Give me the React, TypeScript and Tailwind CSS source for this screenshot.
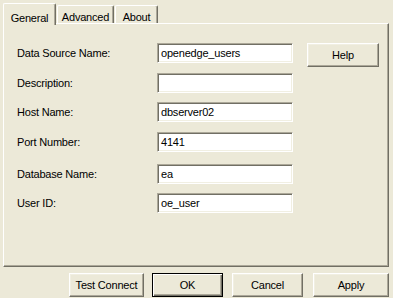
import React from 'react';

const fields = [
  { label: 'Data Source Name:', value: 'openedge_users', gap: 'mt-0' },
  { label: 'Description:', value: '', gap: 'mt-[10px]' },
  { label: 'Host Name:', value: 'dbserver02', gap: 'mt-[9px]' },
  { label: 'Port Number:', value: '4141', gap: 'mt-[10px]' },
  { label: 'Database Name:', value: 'ea', gap: 'mt-[12px]' },
  { label: 'User ID:', value: 'oe_user', gap: 'mt-[9px]' },
];

const raised =
  'border border-t-white border-l-white border-r-[#716f64] border-b-[#716f64] shadow-[inset_-1px_-1px_0_#aca899,inset_1px_1px_0_#f1efe2] bg-[#ece9d8]';

function Button({ label, className = '', isDefault = false }: { label: string; className?: string; isDefault?: boolean }) {
  if (isDefault) {
    return (
      <button className={`h-[24px] border border-black bg-[#ece9d8] shadow-[inset_1px_1px_0_#ffffff,inset_-1px_-1px_0_#716f64,inset_-2px_-2px_0_#aca899] flex items-center justify-center ${className}`}>
        {label}
      </button>
    );
  }
  return (
    <button className={`h-[24px] ${raised} flex items-center justify-center ${className}`}>
      {label}
    </button>
  );
}

export default function App() {
  return (
    <div className="w-[393px] h-[298px] bg-[#ece9d8] overflow-hidden text-[11px] tracking-[-0.2px] text-black font-['Liberation_Sans',Arial,sans-serif]">
      {/* tabs */}
      <div className="flex items-end h-[23px] pl-[3px] pt-[3px]">
        <div className="relative z-10 -mb-[2px] h-[22px] w-[53px] bg-[#ece9d8] border-l border-t border-r border-l-white border-t-white border-r-[#716f64] shadow-[inset_-1px_0_0_#aca899] rounded-tl-[2px] rounded-tr-[2px] flex justify-center pt-[6px]">
          General
        </div>
        <div className="ml-[1px] h-[18px] w-[57px] border-l border-t border-r border-l-white border-t-white border-r-[#716f64] shadow-[inset_-1px_0_0_#aca899] rounded-tl-[2px] rounded-tr-[2px] flex justify-center pt-[3px]">
          Advanced
        </div>
        <div className="ml-[1px] h-[18px] w-[43px] border-l border-t border-r border-l-white border-t-white border-r-[#716f64] shadow-[inset_-1px_0_0_#aca899] rounded-tl-[2px] rounded-tr-[2px] flex justify-center pt-[3px]">
          About
        </div>
      </div>

      {/* panel */}
      <div className="ml-[3px] w-[386px] h-[244px] border border-t-white border-l-white border-r-[#716f64] border-b-[#716f64] shadow-[inset_-1px_-1px_0_#aca899] pt-[19px] pl-[13px] flex items-start">
        <div className="flex flex-col">
          {fields.map((f) => (
            <div key={f.label} className={`flex items-center h-[20px] ${f.gap}`}>
              <span className="w-[140px]">{f.label}</span>
              <div className="w-[136px] h-[20px] bg-white border border-t-[#aca899] border-l-[#aca899] border-r-white border-b-white shadow-[inset_1px_1px_0_#716f64,inset_-1px_-1px_0_#f1efe2] flex items-center pl-[3px]">
                {f.value}
              </div>
            </div>
          ))}
        </div>
        <Button label="Help" className="ml-[14px] w-[72px]" />
      </div>

      {/* bottom buttons */}
      <div className="flex mt-[6px]">
        <Button label="Test Connect" className="ml-[69px] w-[75px]" />
        <Button label="OK" isDefault className="ml-[8px] w-[71px]" />
        <Button label="Cancel" className="ml-[9px] w-[71px]" />
        <Button label="Apply" className="ml-[10px] w-[76px]" />
      </div>
    </div>
  );
}
